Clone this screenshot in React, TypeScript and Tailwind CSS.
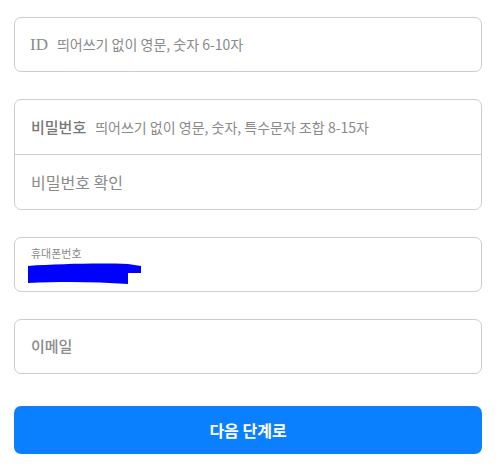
import React from 'react';

const KR = "font-['Noto_Sans_CJK_KR','Noto_Sans',sans-serif]";

function Row({ children, className = '' }: { children: React.ReactNode; className?: string }) {
    return <div className={`flex items-center pl-[16px] ${className}`}>{children}</div>;
}

export default function App() {
    return (
        <div className={`w-[500px] h-[469px] bg-white pl-[14px] pr-[18px] pt-[17px] ${KR}`}>
            <div className="flex flex-col gap-[27px]">
                {/* 아이디 */}
                <div className="h-[55px] flex border border-[#cccccc] rounded-[7px]">
                    <Row className="flex-1 !pl-[15px]">
                        <span className="font-['Liberation_Serif',serif] text-[17px] text-[#8a8a8a]">ID</span>
                        <span className="ml-[9px] text-[14px] text-[#8a8a8a]">띄어쓰기 없이 영문, 숫자 6-10자</span>
                    </Row>
                </div>

                {/* 비밀번호 */}
                <div className="border border-[#cccccc] rounded-[7px]">
                    <Row className="h-[55px] border-b border-[#cccccc]">
                        <span className="text-[15px] font-medium text-[#777777]">비밀번호</span>
                        <span className="ml-[9px] text-[14px] text-[#8a8a8a]">띄어쓰기 없이 영문, 숫자, 특수문자 조합 8-15자</span>
                    </Row>
                    <Row className="h-[54px]">
                        <span className="text-[16px] text-[#8a8a8a]">비밀번호 확인</span>
                    </Row>
                </div>

                {/* 휴대폰번호 */}
                <div className="h-[55px] border border-[#cccccc] rounded-[7px] pl-[16px] pt-[8px]">
                    <div className="text-[11px] leading-[14px] text-[#8a8a8a]">휴대폰번호</div>
                    <svg width="114" height="22" viewBox="0 0 114 22" className="block -ml-[3px] mt-[3px]">
                        <path
                            d="M0 3 C30 1 70 0 100 1 L113 3 L113 10 L100 10 L100 21 C70 19 40 18 0 20 Z"
                            fill="#0000ff"
                        />
                    </svg>
                </div>

                {/* 이메일 */}
                <div className="h-[55px] flex border border-[#cccccc] rounded-[7px]">
                    <Row className="flex-1">
                        <span className="text-[15px] font-medium text-[#8a8a8a]">이메일</span>
                    </Row>
                </div>
            </div>

            <button className="mt-[32px] w-full h-[48px] rounded-[7px] bg-[#0a80ff] text-white text-[16px] font-bold">
                다음 단계로
            </button>
        </div>
    );
}
